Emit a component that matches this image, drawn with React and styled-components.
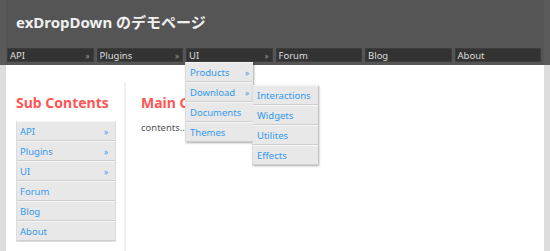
import React from "react";
import styled, { createGlobalStyle } from "styled-components";

const GlobalStyle = createGlobalStyle`
	html, body {
		margin: 0;
		padding: 0;
	}
	body {
		background: linear-gradient(#5a5a5a 0, #5a5a5a 65px, #dddddd 65px);
		font-family: "Noto Sans", "Noto Sans CJK JP", sans-serif;
		min-height: 251px;
	}
	ul {
		list-style: none;
		margin: 0;
		padding: 0;
	}
`

function App() {
	const globalMenu = [
		{ name: 'API', sub: true },
		{ name: 'Plugins', sub: true },
		{ name: 'UI', sub: true, open: true },
		{ name: 'Forum' },
		{ name: 'Blog' },
		{ name: 'About' },
	]
	const uiMenu = [
		{ name: 'Products', sub: true },
		{ name: 'Download', sub: true, open: true },
		{ name: 'Documents' },
		{ name: 'Themes' },
	]
	const downloadMenu = ['Interactions', 'Widgets', 'Utilites', 'Effects']

	return (
		<>
		<GlobalStyle />
		<Wrapper>
			<Header>
				<Title>exDropDown のデモページ</Title>
				<Nav>
					{globalMenu.map((item, index) => (
						<NavItem key={index}>
							<span>{item.name}</span>
							{item.sub ? <NavArrow>»</NavArrow> : ''}
							{item.open ? (
								<Dropdown>
									{uiMenu.map((child, i) => (
										<DropItem key={i}>
											<span>{child.name}</span>
											{child.sub ? <DropArrow>»</DropArrow> : ''}
											{child.open ? (
												<SubDropdown>
													{downloadMenu.map((leaf, j) => (
														<DropItem key={j}>{leaf}</DropItem>
													))}
												</SubDropdown>
											) : ''}
										</DropItem>
									))}
								</Dropdown>
							) : ''}
						</NavItem>
					))}
				</Nav>
			</Header>
			<Content>
				<Sidebar>
					<Heading>Sub Contents</Heading>
					<SideList>
						{globalMenu.map((item, index) => (
							<SideItem key={index}>
								<span>{item.name}</span>
								{item.sub ? <DropArrow>»</DropArrow> : ''}
							</SideItem>
						))}
					</SideList>
				</Sidebar>
				<Main>
					<Heading>Main Contents</Heading>
					<Text>contents...</Text>
				</Main>
			</Content>
		</Wrapper>
		</>
	)
}

const Wrapper = styled.div`
	width: 538px;
	margin: 0 auto;
`

const Header = styled.header`
	height: 65px;
	background: #555555;
	padding-top: 10px;
	box-sizing: border-box;
	position: relative;
	z-index: 2;
`

const Title = styled.h1`
	margin: 0 0 0 10px;
	font-size: 15px;
	line-height: 24px;
	font-weight: bold;
	color: #f0f0f0;
`

const Nav = styled.ul`
	display: grid;
	grid-template-columns: repeat(6, 1fr);
	gap: 3px;
	padding: 0 3px 0 1px !important;
	margin-top: 14px !important;
	height: 14px;
`

const NavItem = styled.li`
	position: relative;
	display: flex;
	align-items: center;
	justify-content: space-between;
	background: #333333;
	border: 1px solid #3d3d3d;
	height: 14px;
	box-sizing: border-box;
	padding: 0 3px 0 2px;
	font-size: 9.5px;
	color: #dddddd;
`

const NavArrow = styled.span`
	font-size: 8px;
	color: #999999;
`

const Dropdown = styled.ul`
	position: absolute;
	top: 13px;
	left: -2px;
	width: 68px;
	background: #e8e8e8;
	box-shadow: 1px 1px 2px rgba(0, 0, 0, 0.35);
`

const SubDropdown = styled(Dropdown)`
	top: 2px;
	left: 66px;
	width: 66px;
`

const DropItem = styled.li`
	position: relative;
	display: flex;
	align-items: center;
	justify-content: space-between;
	height: 20px;
	box-sizing: border-box;
	padding: 0 4px 0 4px;
	border-top: 1px solid #f6f6f6;
	border-bottom: 1px solid #cfcfcf;
	border-left: 1px solid #dcdcdc;
	font-size: 9.5px;
	color: #3399ee;
	background: #e8e8e8;
	white-space: nowrap;
`

const DropArrow = styled.span`
	font-size: 8px;
	color: #3399ee;
`

const Content = styled.div`
	display: flex;
	background: #ffffff;
	min-height: 186px;
	padding: 18px 0 0 10px;
	box-sizing: border-box;
`

const Sidebar = styled.aside`
	width: 100px;
	margin-right: 8px;
`

const Heading = styled.h2`
	margin: 11px 0 9px 0;
	font-size: 14px;
	line-height: 18px;
	font-weight: bold;
	color: #ff5555;
	white-space: nowrap;
`

const SideList = styled.ul`
	border: 1px solid #dddddd;
	border-top: none;
`

const SideItem = styled(DropItem)`
	border-left: none;
	padding: 0 7px 0 3px;
`

const Main = styled.main`
	flex: 1;
	border-left: 2px solid #eeeeee;
	padding-left: 15px;
	overflow: hidden;
`

const Text = styled.p`
	margin: 0;
	font-size: 9.5px;
	line-height: 14px;
	color: #555555;
`

export default App
